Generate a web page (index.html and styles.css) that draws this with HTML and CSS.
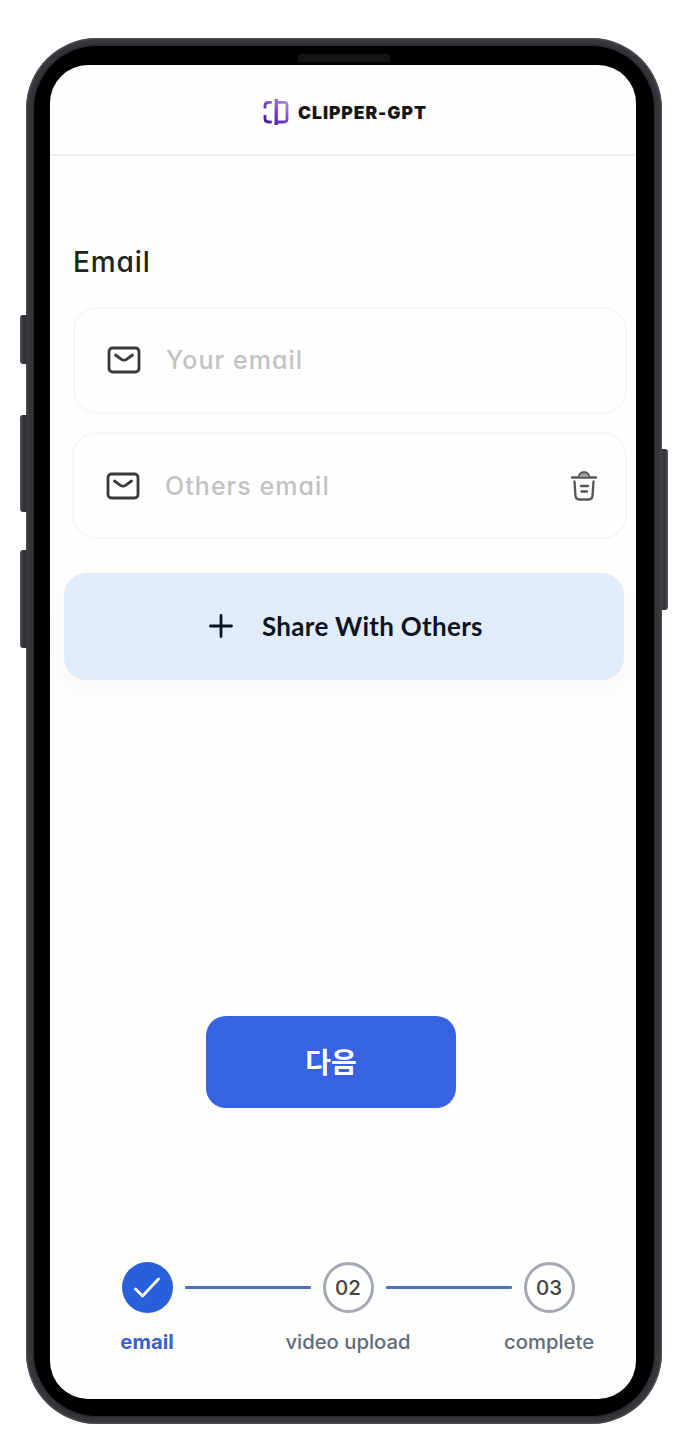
FILE: index.html
```html
<!DOCTYPE html>
<html lang="ko">
<head>
<meta charset="utf-8">
<title>Clipper-GPT</title>
<link rel="stylesheet" href="styles.css">
</head>
<body>
<div class="phone">
  <i class="key key-mute"></i><i class="key key-up"></i><i class="key key-down"></i><i class="key key-power"></i>
  <div class="bezel">
    <i class="speaker"></i>
    <main class="screen">
      <header class="header">
        <svg class="logo" viewBox="0 0 26 28" fill="none" stroke="url(#violet)" stroke-width="2.8">
          <defs><linearGradient id="violet" x1="2" y1="27" x2="24" y2="2" gradientUnits="userSpaceOnUse"><stop stop-color="#3d158f"/><stop offset=".5" stop-color="#7440c6"/><stop offset="1" stop-color="#b48be9"/></linearGradient></defs>
          <path d="M8.7 4.3H5.5Q2 4.3 2 7.5V10.5M2 17V20.5Q2 24 5.5 24H8.7M13.2 4.3H21Q24 4.3 24 7V21Q24 24 21 24H13.2"/><path stroke-width="3.4" d="M13.4 1L13.2 27"/>
        </svg>
        <span class="brand">CLIPPER-GPT</span>
      </header>
      <section class="form">
        <h1 class="title">Email</h1>
        <div class="field">
          <svg class="mail" viewBox="0 0 34 28"><rect x="2" y="2" width="30" height="24" rx="3.5"/><path d="M8.5 9L14.5 13.3Q17 15 19.5 13.3L25.5 9"/></svg>
          <span class="placeholder">Your email</span>
        </div>
        <div class="field field-other">
          <svg class="mail" viewBox="0 0 34 28"><rect x="2" y="2" width="30" height="24" rx="3.5"/><path d="M8.5 9L14.5 13.3Q17 15 19.5 13.3L25.5 9"/></svg>
          <span class="placeholder">Others email</span>
          <svg class="trash" viewBox="0 0 28 32"><path d="M2 7.5H26M9 7Q9.5 2.5 14 2.5Q18.5 2.5 19 7M4.5 11.5L5.5 26Q5.8 29.5 9.5 29.5H18.5Q22.2 29.5 22.5 26L23.5 11.5M11 16H18M11.5 21.5H17"/><path class="lid" d="M9 7Q10 3 14 3Q18 3 19 7Z"/></svg>
        </div>
        <button class="share">
          <svg class="plus" viewBox="0 0 26 26"><path d="M13 2.5V23.5M2.5 13H23.5"/></svg>
          <span>Share With Others</span>
        </button>
      </section>
      <button class="next">다음</button>
      <ol class="steps">
        <li class="step done"><span class="dot"><svg class="check" viewBox="0 0 26 22"><path d="M1.5 12L8.5 19L24.5 2"/></svg></span><span class="label">email</span></li>
        <li class="line"></li>
        <li class="step"><span class="dot">02</span><span class="label">video upload</span></li>
        <li class="line"></li>
        <li class="step"><span class="dot">03</span><span class="label">complete</span></li>
      </ol>
    </main>
  </div>
</div>
</body>
</html>
```
FILE: styles.css
```css
* { box-sizing: border-box; }
body { margin: 0; background: #fff; font-family: Inter, "Noto Sans CJK KR", sans-serif; }
button { border: 0; padding: 0; font-family: inherit; }

.phone { position: relative; width: 636px; height: 1386px; margin: 38px 0 0 26px; padding: 8px; border-radius: 71px; background: #36353b; box-shadow: inset 0 0 2px 1px #55545b; }
.bezel { position: relative; height: 100%; padding: 19px 17px 17px 16px; border-radius: 63px; background: #000; box-shadow: 0 0 2px 1px #242328; }
.speaker { position: absolute; left: 264px; top: 8px; width: 92px; height: 8px; border-radius: 3px 3px 0 0; background: #141412; }
.key { position: absolute; left: -6px; width: 7px; border-radius: 3px 0 0 3px; background: linear-gradient(90deg, #57565c, #303035 45%, #36353b); }
.key-mute { top: 277px; height: 49px; }
.key-up { top: 377px; height: 97px; }
.key-down { top: 512px; height: 98px; }
.key-power { left: auto; right: -6px; top: 411px; height: 161px; border-radius: 0 3px 3px 0; background: linear-gradient(270deg, #57565c, #303035 45%, #44434a); }

.screen { display: flex; flex-direction: column; width: 586px; height: 1334px; border-radius: 38px; background: #fefefe; overflow: hidden; }
.header { display: flex; flex: none; align-items: center; height: 91px; padding: 5px 0 0 213px; border-bottom: 2px solid #eee; }
.logo { width: 26px; height: 28px; margin-right: 9px; }
.brand { font-size: 17.5px; font-weight: 900; letter-spacing: .95px; color: #151515; }

.form { display: flex; flex-direction: column; padding: 86px 9px 0 14px; }
.title { height: 40px; margin: 0 0 25px 9px; font-size: 28px; line-height: 40px; font-weight: 550; letter-spacing: .9px; color: #222; font-feature-settings: "cv11"; }
.field { display: flex; align-items: center; height: 107px; margin-left: 9px; padding: 0 0 2px 32px; border: 2px solid #f6f6f6; border-radius: 24px; }
.field-other { margin: 18px 0 34px 8px; padding: 0 27px 0 32px; }
.mail { width: 34px; height: 28px; margin-right: 25px; fill: none; stroke: #393939; stroke-width: 2.8; stroke-linecap: round; }
.placeholder { font-size: 25px; font-weight: 450; letter-spacing: 1.05px; color: #c2c2c2; font-feature-settings: "cv11"; }
.trash { width: 28px; height: 32px; margin-left: auto; fill: none; stroke: #555; stroke-width: 2.3; stroke-linecap: round; }
.trash .lid { fill: #999; stroke: none; }
.share { display: flex; align-items: center; width: 560px; height: 107px; padding: 0 0 2px 144px; border-radius: 22px; background: #e0ecfa; box-shadow: 0 10px 24px rgba(60, 40, 30, .03); font-family: Lato, sans-serif; font-size: 26px; font-weight: 700; letter-spacing: .28px; color: #0b1420; }
.plus { width: 26px; height: 26px; margin-right: 28px; fill: none; stroke: #0b1420; stroke-width: 2.8; stroke-linecap: round; }

.next { flex: none; width: 250px; height: 92px; margin: 336px 0 0 156px; padding-bottom: 3px; border-radius: 20px; background: #3762e2; color: #fff; font-family: "Noto Sans CJK KR", sans-serif; font-size: 28px; font-weight: 700; }

.steps { display: flex; margin: 154px 0 0 71.5px; padding: 0; list-style: none; }
.step { display: flex; flex: none; flex-direction: column; align-items: center; width: 51px; }
.dot { display: flex; align-items: center; justify-content: center; width: 51px; height: 51px; border: 3px solid #a4a9b2; border-radius: 50%; font-size: 20.5px; font-weight: 500; color: #444; }
.done .dot { border: 0; background: #2860db; }
.check { width: 26px; height: 22px; fill: none; stroke: #fff; stroke-width: 2.7; stroke-linecap: round; stroke-linejoin: round; }
.label { margin-top: 16px; font-size: 20.3px; line-height: 26px; font-weight: 500; white-space: nowrap; color: #646b77; }
.done .label { font-weight: 700; color: #3d5fce; }
.line { width: 126px; height: 3px; margin: 24px 12px 0; border-radius: 1px; background: #4a6fc3; }
```
